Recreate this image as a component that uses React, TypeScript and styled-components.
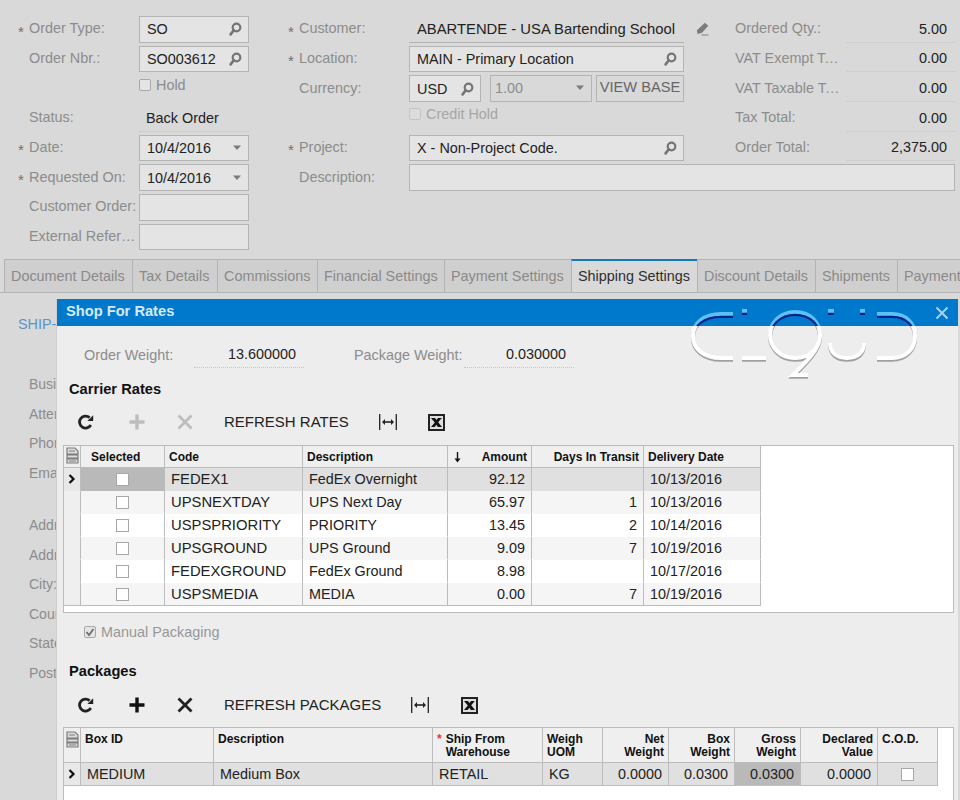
import React from "react";
import styled, { createGlobalStyle } from "styled-components";

const GlobalStyle = createGlobalStyle`
  html, body {
    margin: 0;
    padding: 0;
    background: #d9d9d9;
  }
  body {
    font-family: "Liberation Sans", Arial, sans-serif;
    font-size: 14.4px;
    color: #222;
  }
`;

const Page = styled.div`
  position: relative;
  width: 960px;
  height: 800px;
  overflow: hidden;
  background: #d9d9d9;
`;

/* ---------- order form ---------- */

const Form = styled.div`
  display: flex;
  height: 259px;
  box-sizing: border-box;
  padding: 16px 0 0 21px;
`;

const LeftColumn = styled.div`
  display: flex;
  flex-direction: column;
  gap: 3px;
  width: 228px;
  margin-right: 42px;
`;

const RightBlock = styled.div`
  display: flex;
  flex-direction: column;
  gap: 3px;
  width: 664px;
`;

const RightTop = styled.div`
  display: flex;
  gap: 51px;
`;

const MiddleColumn = styled.div`
  display: flex;
  flex-direction: column;
  gap: 3px;
  width: 393px;
`;

const TotalsColumn = styled.div`
  display: flex;
  flex-direction: column;
  gap: 3px;
  width: 220px;
`;

const Row = styled.div`
  display: flex;
  align-items: center;
  height: 26.67px;
`;

const Star = styled.span`
  flex: 0 0 11px;
  margin-left: -3px;
  font-size: 15px;
  line-height: 15px;
  color: #6f6f6f;
  padding-top: 4px;
`;

const Label = styled.span<{ $width?: number }>`
  flex: 0 0 ${(p) => p.$width ?? 110}px;
  width: ${(p) => p.$width ?? 110}px;
  box-sizing: border-box;
  padding-right: 1px;
  white-space: nowrap;
  overflow: hidden;
  text-overflow: ellipsis;
  color: #8c8c8c;
  margin-top: -2px;
`;

const Field = styled.div<{ $width?: number; $grow?: boolean }>`
  display: flex;
  align-items: center;
  justify-content: space-between;
  box-sizing: border-box;
  height: 100%;
  width: ${(p) => (p.$width ? `${p.$width}px` : "auto")};
  flex: ${(p) => (p.$grow ? 1 : "none")};
  padding: 0 6px 0 7px;
  background: #e4e4e4;
  border: 1px solid #b4b4b4;
  color: #222;
  white-space: nowrap;
`;

const RateField = styled(Field)`
  margin-left: 9px;
  padding-left: 4px;
  padding-bottom: 2px;
  background: #d9d9d9;
  color: #8c8c8c;
`;

const PlainValue = styled.div<{ $width: number; $dotted?: boolean; $right?: boolean; $caps?: boolean }>`
  flex: none;
  box-sizing: border-box;
  width: ${(p) => p.$width}px;
  height: 100%;
  display: flex;
  align-items: center;
  justify-content: ${(p) => (p.$right ? "flex-end" : "flex-start")};
  padding: ${(p) => (p.$right ? "0 8px 0 0" : p.$caps ? "0 0 0 8px" : "0 0 0 7px")};
  border-bottom: 1px ${(p) => (p.$dotted ? "dotted #c6c6c6" : "solid #b4b4b4")};
  font-size: ${(p) => (p.$caps ? "14.8px" : "inherit")};
  white-space: nowrap;
`;

const ViewBase = styled.button`
  flex: none;
  box-sizing: border-box;
  height: 100%;
  width: 88px;
  margin-left: 4px;
  padding: 0 0 3px;
  background: #d9d9d9;
  border: 1px solid #b4b4b4;
  color: #666;
  font: inherit;
  font-size: 14.67px;
  white-space: nowrap;
`;

const CheckRow = styled.label<{ $offset: number; $faint?: boolean }>`
  display: flex;
  align-items: center;
  gap: 5px;
  box-sizing: border-box;
  height: 100%;
  padding-bottom: 8px;
  margin-left: ${(p) => p.$offset}px;
  color: ${(p) => (p.$faint ? "#a6a6a6" : "#8c8c8c")};
`;

const CheckBox = styled.span<{ $white?: boolean; $size?: number; $faint?: boolean }>`
  flex: none;
  display: flex;
  align-items: center;
  justify-content: center;
  box-sizing: border-box;
  width: ${(p) => p.$size ?? 12}px;
  height: ${(p) => p.$size ?? 12}px;
  background: ${(p) => (p.$white ? "#fff" : p.$faint ? "#dcdcdc" : "#e4e4e4")};
  border: 1px solid ${(p) => (p.$faint ? "#c4c4c4" : "#a8a8a8")};
  border-radius: ${(p) => (p.$white ? 0 : 2)}px;
`;

const PencilSlot = styled.span`
  flex: none;
  display: flex;
  margin-left: 11px;
`;

/* ---------- tabs ---------- */

const Tabs = styled.div`
  display: flex;
  height: 34px;
  box-sizing: border-box;
  padding-left: 4px;
  border-bottom: 1px solid #b4b4b4;
  overflow: hidden;
`;

const Tab = styled.div<{ $active?: boolean; $width: number }>`
  flex: none;
  box-sizing: border-box;
  width: ${(p) => p.$width}px;
  height: ${(p) => (p.$active ? 34 : 33)}px;
  padding: ${(p) => (p.$active ? 7 : 8)}px 0 0 6px;
  background: ${(p) => (p.$active ? "#d9d9d9" : "#cfcfcf")};
  color: ${(p) => (p.$active ? "#2e2e2e" : "#8a8a8a")};
  border-top: ${(p) => (p.$active ? "2px solid #1279bf" : "1px solid #b4b4b4")};
  border-left: 1px solid #b4b4b4;
  white-space: nowrap;
`;

/* ---------- what shows beside the dialog ---------- */

const Details = styled.div`
  padding-top: 21px;
`;

const DetailsHeading = styled.div`
  margin-left: 18px;
  height: 20px;
  line-height: 20px;
  color: #5c93c9;
  white-space: nowrap;
`;

const DetailsRow = styled.div<{ $gapTop?: number }>`
  margin: ${(p) => p.$gapTop ?? 0}px 0 0 29px;
  height: 29.5px;
  line-height: 29.5px;
  font-size: 14px;
  color: #8c8c8c;
  white-space: nowrap;
`;

const DetailsList = styled.div`
  margin-top: 36px;
`;

/* ---------- dialog ---------- */

const Modal = styled.div`
  position: absolute;
  top: 299px;
  left: 56px;
  width: 902px;
  bottom: 0;
  box-sizing: border-box;
  background: #ededed;
  border-left: 1px solid #cfcfcf;
  overflow: hidden;
`;

const ModalHeader = styled.div`
  display: flex;
  align-items: center;
  justify-content: space-between;
  box-sizing: border-box;
  height: 27px;
  margin-left: -1px;
  padding: 0 9px 3px 10px;
  background: #0079cd;
  color: #d6e9f7;
  font-size: 14.67px;
  font-weight: bold;
`;

const CloseSlot = styled.span`
  display: flex;
  margin-top: 3px;
`;

const Logo = styled.svg`
  position: absolute;
  top: 8px;
  left: 633px;
`;

const WeightRow = styled.div`
  display: flex;
  align-items: center;
  height: 27px;
  margin: 15px 0 0 27px;
`;

const WeightLabel = styled.span<{ $indent?: number }>`
  flex: none;
  width: 110px;
  margin-left: ${(p) => p.$indent ?? 0}px;
  color: #8c8c8c;
  white-space: nowrap;
`;

const SectionTitle = styled.div<{ $top: number }>`
  margin: ${(p) => p.$top}px 0 0 12px;
  height: 18px;
  line-height: 18px;
  font-size: 14.67px;
  font-weight: bold;
  color: #111;
`;

const Toolbar = styled.div<{ $top: number; $bottom: number }>`
  display: flex;
  align-items: center;
  height: 30px;
  margin: ${(p) => p.$top}px 0 ${(p) => p.$bottom}px 5px;
`;

const ToolSlot = styled.span<{ $width: number }>`
  flex: none;
  display: flex;
  align-items: center;
  justify-content: center;
  width: ${(p) => p.$width}px;
`;

const ToolText = styled.span`
  flex: none;
  padding: 0 15px 1px 18px;
  font-size: 15px;
  color: #222;
  white-space: nowrap;
`;

const GridFrame = styled.div<{ $height: number }>`
  box-sizing: border-box;
  margin-left: 6px;
  width: 891px;
  height: ${(p) => p.$height}px;
  background: #fff;
  border: 1px solid #bcbcbc;
`;

const Table = styled.table`
  border-collapse: separate;
  border-spacing: 0;
  table-layout: fixed;
  tbody tr:last-child td {
    border-bottom-color: #bcbcbc;
  }
`;

const Head = styled.th<{ $align?: string; $top?: boolean }>`
  box-sizing: border-box;
  padding: ${(p) => (p.$top ? "5px 4px 0 4px" : "1px 4px 0 4px")};
  vertical-align: ${(p) => (p.$top ? "top" : "middle")};
  text-align: ${(p) => p.$align ?? "left"};
  background: #efefef;
  border-right: 1px solid #bcbcbc;
  border-bottom: 1px solid #bcbcbc;
  font-size: 12px;
  line-height: 13px;
  font-weight: bold;
  color: #111;
`;

const IconHead = styled(Head)`
  padding: ${(p) => (p.$top ? "3px 0 0" : "0")};
  text-align: center;
`;

const SelectedHead = styled(Head)`
  padding-left: 10px;
`;

const HeadRow = styled.tr<{ $height: number }>`
  height: ${(p) => p.$height}px;
`;

const BodyRow = styled.tr`
  height: 23px;
`;

const Cell = styled.td<{ $align?: string; $bg: string; $caps?: boolean }>`
  box-sizing: border-box;
  padding: 0 6px;
  text-align: ${(p) => p.$align ?? "left"};
  background: ${(p) => p.$bg};
  border-right: 1px solid #bcbcbc;
  border-bottom: 1px solid transparent;
  font-size: ${(p) => (p.$caps ? "14.8px" : "inherit")};
  color: #222;
  white-space: nowrap;
  overflow: hidden;
`;

const IndicatorCell = styled(Cell)`
  padding: 0;
  text-align: center;
`;

const CellCheck = styled.div`
  display: flex;
  justify-content: center;
`;

const SortedHead = styled.div`
  display: flex;
  align-items: center;
  justify-content: space-between;
  padding-left: 1px;
`;

const RequiredHead = styled.div`
  display: flex;
  gap: 4px;
`;

const RedStar = styled.span`
  color: #e23b3b;
`;

const ManualRow = styled.div`
  display: flex;
  align-items: center;
  gap: 5px;
  height: 18px;
  margin: 10px 0 0 27px;
  color: #979797;
`;

/* ---------- icons ---------- */

const SearchIcon = () => (
  <svg width="14" height="14" viewBox="0 0 14 14">
    <circle cx="8.5" cy="5.5" r="3.8" fill="none" stroke="#757575" strokeWidth="2.2" />
    <path d="M5.8 8.2 2.6 12.4" stroke="#757575" strokeWidth="2.6" strokeLinecap="round" />
  </svg>
);

const CaretIcon = () => (
  <svg width="10" height="6" viewBox="0 0 10 6">
    <path d="M1 .5h8L5 5z" fill="#7b7b7b" />
  </svg>
);

const PencilIcon = () => (
  <svg width="14" height="14" viewBox="0 0 14 14">
    <path d="M9.800.8 13.300 3.800 7 10.800 2.500 12 1.800 8.600z" fill="#7b7b7b" />
    <path d="M6.500 13h7" stroke="#9a9a9a" strokeWidth="1.400" />
  </svg>
);

const RefreshIcon = () => (
  <svg width="16" height="16" viewBox="0 0 16 16">
    <path d="M12.800 11A6 6 0 1 1 11.600 3.600" fill="none" stroke="#222" strokeWidth="2.800" />
    <path d="M9.400 7h5.800V1.200z" fill="#222" />
  </svg>
);

const PlusIcon = ({ color }: { color: string }) => (
  <svg width="16" height="16" viewBox="0 0 16 16">
    <path d="M8 .5v15M.5 8h15" stroke={color} strokeWidth="3.400" />
  </svg>
);

const CrossIcon = ({ color }: { color: string }) => (
  <svg width="16" height="16" viewBox="0 0 16 16">
    <path d="M1.500 1.500 14.500 14.500M14.500 1.500 1.500 14.500" stroke={color} strokeWidth="2.800" />
  </svg>
);

const FitIcon = () => (
  <svg width="18" height="16" viewBox="0 0 18 16">
    <path d="M.7 0v16M17.300 0v16" stroke="#222" strokeWidth="1.300" />
    <path d="M4 8h10" stroke="#222" strokeWidth="1.600" />
    <path d="M3 8l3-3v6zM15 8l-3-3v6z" fill="#222" />
  </svg>
);

const ExcelIcon = () => (
  <svg width="17" height="17" viewBox="0 0 17 17">
    <rect x="1" y="1" width="15" height="15" fill="#dedede" stroke="#222" strokeWidth="2" />
    <path d="M3 4h4l1.500 2.100L10 4h3.800L10.200 8.200 14 13h-4.200L8.300 10.800 6.700 13H3l3.800-4.600z" fill="#111" />
  </svg>
);

const ColumnsIcon = () => (
  <svg width="13" height="17" viewBox="0 0 13 17">
    <path d="M1 1h8l3 3v3H1zM1 8h11v3H1zM1 12h11v4H1z" fill="#dcdcdc" stroke="#7c7c7c" strokeWidth="1.200" />
    <path d="M3 4h6M3 14h7" stroke="#7c7c7c" strokeWidth="1.200" />
  </svg>
);

const RowArrow = () => (
  <svg width="8" height="10" viewBox="0 0 8 10">
    <path d="M1.500 1 5.500 5 1.500 9" fill="none" stroke="#111" strokeWidth="2.200" />
  </svg>
);

const SortArrow = () => (
  <svg width="9" height="11" viewBox="0 0 9 11">
    <path d="M4.500 0v8" stroke="#111" strokeWidth="1.400" />
    <path d="M1.500 6.500h6l-3 4z" fill="#111" />
  </svg>
);

const TickIcon = () => (
  <svg width="10" height="10" viewBox="0 0 10 10">
    <path d="M1.500 5 4 8l4.500-6" fill="none" stroke="#6e6e6e" strokeWidth="1.800" />
  </svg>
);

const CloseIcon = () => (
  <svg width="14" height="14" viewBox="0 0 14 14">
    <path d="M1.500 1.500 12.500 12.500M12.500 1.500 1.500 12.500" stroke="#a7d0ee" strokeWidth="2" />
  </svg>
);

const LOGO_STROKES =
  "M733 314H721C704 314 693 323 693 336S704 358 721 358H733" +
  "M742 358H766M742 311H747" +
  "M795 312C810 312 820 322 820 335S810 358 795 358S770 347 770 335S780 312 795 312Z" +
  "M820 336C819 350 806 362 793 375H808" +
  "M828 311H834M860 311H865" +
  "M830 343C830 352 836 358 847 358S864 352 864 343" +
  "M877 314H892C906 314 915 323 915 336S906 358 892 358H877";

const CloudLogo = () => (
  <Logo width="230" height="72" viewBox="690 307 230 72">
    <defs>
      <clipPath id="logo-band">
        <rect x="690" y="307" width="230" height="19" />
      </clipPath>
      <clipPath id="logo-body">
        <rect x="690" y="326" width="230" height="53" />
      </clipPath>
    </defs>
    <g fill="none" clipPath="url(#logo-band)">
      <path d={LOGO_STROKES} stroke="#5cc2f4" strokeWidth="4" />
      <path d={LOGO_STROKES} stroke="#04238f" strokeWidth="2.200" transform="translate(0 2.800)" />
    </g>
    <g fill="none" clipPath="url(#logo-body)">
      <path d={LOGO_STROKES} stroke="#a0a0a0" strokeWidth="4" transform="translate(0 1.800)" />
      <path d={LOGO_STROKES} stroke="#fff" strokeWidth="4" />
    </g>
  </Logo>
);

/* ---------- data ---------- */

const tabs: [string, number][] = [
  ["Document Details", 128],
  ["Tax Details", 85],
  ["Commissions", 100],
  ["Financial Settings", 127],
  ["Payment Settings", 127],
  ["Shipping Settings", 126],
  ["Discount Details", 118],
  ["Shipments", 82],
  ["Payments", 70],
];

const rates = [
  ["FEDEX1", "FedEx Overnight", "92.12", "", "10/13/2016"],
  ["UPSNEXTDAY", "UPS Next Day", "65.97", "1", "10/13/2016"],
  ["USPSPRIORITY", "PRIORITY", "13.45", "2", "10/14/2016"],
  ["UPSGROUND", "UPS Ground", "9.09", "7", "10/19/2016"],
  ["FEDEXGROUND", "FedEx Ground", "8.98", "", "10/17/2016"],
  ["USPSMEDIA", "MEDIA", "0.00", "7", "10/19/2016"],
];

const rateColumns = [17, 84, 138, 145, 84, 112, 117];
const packageColumns = [17, 133, 219, 110, 60, 66, 66, 66, 77, 60];

const totals = [
  ["Ordered Qty.:", "5.00"],
  ["VAT Exempt Total:", "0.00"],
  ["VAT Taxable Total:", "0.00"],
  ["Tax Total:", "0.00"],
  ["Order Total:", "2,375.00"],
];

const rowBackground = (index: number) => {
  if (index === 0) return "#e0e0e0";
  return index % 2 === 1 ? "#f5f5f5" : "#ffffff";
};

const Columns = ({ widths }: { widths: number[] }) => (
  <colgroup>
    {widths.map((w, i) => (
      <col key={i} style={{ width: w }} />
    ))}
  </colgroup>
);

const App = () => {
  return (
    <Page>
      <GlobalStyle />
      <Form>
        <LeftColumn>
          <Row>
            <Star>*</Star>
            <Label>Order Type:</Label>
            <Field $width={110}>SO<SearchIcon /></Field>
          </Row>
          <Row>
            <Star />
            <Label>Order Nbr.:</Label>
            <Field $width={110}>SO003612<SearchIcon /></Field>
          </Row>
          <Row>
            <CheckRow $offset={118}>
              <CheckBox />
              Hold
            </CheckRow>
          </Row>
          <Row>
            <Star />
            <Label>Status:</Label>
            <PlainValue $width={110} $dotted>Back Order</PlainValue>
          </Row>
          <Row>
            <Star>*</Star>
            <Label>Date:</Label>
            <Field $width={110}>10/4/2016<CaretIcon /></Field>
          </Row>
          <Row>
            <Star>*</Star>
            <Label>Requested On:</Label>
            <Field $width={110}>10/4/2016<CaretIcon /></Field>
          </Row>
          <Row>
            <Star />
            <Label>Customer Order:</Label>
            <Field $width={110} />
          </Row>
          <Row>
            <Star />
            <Label>External Reference Nbr.:</Label>
            <Field $width={110} />
          </Row>
        </LeftColumn>

        <RightBlock>
          <RightTop>
            <MiddleColumn>
              <Row>
                <Star>*</Star>
                <Label>Customer:</Label>
                <PlainValue $width={275} $caps>ABARTENDE - USA Bartending School</PlainValue>
                <PencilSlot><PencilIcon /></PencilSlot>
              </Row>
              <Row>
                <Star>*</Star>
                <Label>Location:</Label>
                <Field $width={275}>MAIN - Primary Location<SearchIcon /></Field>
              </Row>
              <Row>
                <Star />
                <Label>Currency:</Label>
                <Field $width={72}>USD<SearchIcon /></Field>
                <RateField $width={102}>1.00<CaretIcon /></RateField>
                <ViewBase>VIEW BASE</ViewBase>
              </Row>
              <Row>
                <CheckRow $offset={118} $faint>
                  <CheckBox $faint />
                  Credit Hold
                </CheckRow>
              </Row>
              <Row>
                <Star>*</Star>
                <Label>Project:</Label>
                <Field $width={275}>X - Non-Project Code.<SearchIcon /></Field>
              </Row>
            </MiddleColumn>
            <TotalsColumn>
              {totals.map(([label, value]) => (
                <Row key={label}>
                  <Label $width={112}>{label}</Label>
                  <PlainValue $width={108} $dotted $right>{value}</PlainValue>
                </Row>
              ))}
            </TotalsColumn>
          </RightTop>
          <Row>
            <Star />
            <Label>Description:</Label>
            <Field $grow />
          </Row>
        </RightBlock>
      </Form>

      <Tabs>
        {tabs.map(([name, width]) => (
          <Tab key={name} $width={width} $active={name === "Shipping Settings"}>{name}</Tab>
        ))}
      </Tabs>

      <Details>
        <DetailsHeading>SHIP-TO CONTACT</DetailsHeading>
        <DetailsList>
          <DetailsRow>Business Name:</DetailsRow>
          <DetailsRow>Attention:</DetailsRow>
          <DetailsRow>Phone 1:</DetailsRow>
          <DetailsRow>Email:</DetailsRow>
          <DetailsRow $gapTop={23}>Address Line 1:</DetailsRow>
          <DetailsRow>Address Line 2:</DetailsRow>
          <DetailsRow>City:</DetailsRow>
          <DetailsRow>Country:</DetailsRow>
          <DetailsRow>State:</DetailsRow>
          <DetailsRow>Postal Code:</DetailsRow>
        </DetailsList>
      </Details>

      <Modal>
        <ModalHeader>
          Shop For Rates
          <CloseSlot><CloseIcon /></CloseSlot>
        </ModalHeader>
        <CloudLogo />

        <WeightRow>
          <WeightLabel>Order Weight:</WeightLabel>
          <PlainValue $width={110} $dotted $right>13.600000</PlainValue>
          <WeightLabel $indent={50}>Package Weight:</WeightLabel>
          <PlainValue $width={110} $dotted $right>0.030000</PlainValue>
        </WeightRow>

        <SectionTitle $top={12}>Carrier Rates</SectionTitle>
        <Toolbar $top={9} $bottom={8}>
          <ToolSlot $width={48}><RefreshIcon /></ToolSlot>
          <ToolSlot $width={54}><PlusIcon color="#bdbdbd" /></ToolSlot>
          <ToolSlot $width={42}><CrossIcon color="#bdbdbd" /></ToolSlot>
          <ToolText>REFRESH RATES</ToolText>
          <ToolSlot $width={48}><FitIcon /></ToolSlot>
          <ToolSlot $width={50}><ExcelIcon /></ToolSlot>
        </Toolbar>

        <GridFrame $height={168}>
          <Table>
            <Columns widths={rateColumns} />
            <thead>
              <HeadRow $height={22}>
                <IconHead><ColumnsIcon /></IconHead>
                <SelectedHead>Selected</SelectedHead>
                <Head>Code</Head>
                <Head>Description</Head>
                <Head>
                  <SortedHead><SortArrow />Amount</SortedHead>
                </Head>
                <Head $align="right">Days In Transit</Head>
                <Head>Delivery Date</Head>
              </HeadRow>
            </thead>
            <tbody>
              {rates.map(([code, description, amount, days, date], i) => (
                <BodyRow key={code}>
                  <IndicatorCell $bg={i === 0 ? "#e8e8e8" : "#efefef"}>{i === 0 && <RowArrow />}</IndicatorCell>
                  <Cell $bg={i === 0 ? "#b9b9b9" : rowBackground(i)}>
                    <CellCheck><CheckBox $white $size={13} /></CellCheck>
                  </Cell>
                  <Cell $bg={rowBackground(i)} $caps>{code}</Cell>
                  <Cell $bg={rowBackground(i)}>{description}</Cell>
                  <Cell $bg={rowBackground(i)} $align="right">{amount}</Cell>
                  <Cell $bg={rowBackground(i)} $align="right">{days}</Cell>
                  <Cell $bg={rowBackground(i)}>{date}</Cell>
                </BodyRow>
              ))}
            </tbody>
          </Table>
        </GridFrame>

        <ManualRow>
          <CheckBox><TickIcon /></CheckBox>
          Manual Packaging
        </ManualRow>

        <SectionTitle $top={21}>Packages</SectionTitle>
        <Toolbar $top={10} $bottom={7}>
          <ToolSlot $width={48}><RefreshIcon /></ToolSlot>
          <ToolSlot $width={54}><PlusIcon color="#111" /></ToolSlot>
          <ToolSlot $width={42}><CrossIcon color="#222" /></ToolSlot>
          <ToolText>REFRESH PACKAGES</ToolText>
          <ToolSlot $width={48}><FitIcon /></ToolSlot>
          <ToolSlot $width={50}><ExcelIcon /></ToolSlot>
        </Toolbar>

        <GridFrame $height={120}>
          <Table>
            <Columns widths={packageColumns} />
            <thead>
              <HeadRow $height={35}>
                <IconHead $top><ColumnsIcon /></IconHead>
                <Head $top>Box ID</Head>
                <Head $top>Description</Head>
                <Head $top>
                  <RequiredHead>
                    <RedStar>*</RedStar>
                    <span>Ship From<br />Warehouse</span>
                  </RequiredHead>
                </Head>
                <Head $top>Weigh<br />UOM</Head>
                <Head $top $align="right">Net<br />Weight</Head>
                <Head $top $align="right">Box<br />Weight</Head>
                <Head $top $align="right">Gross<br />Weight</Head>
                <Head $top $align="right">Declared<br />Value</Head>
                <Head $top>C.O.D.</Head>
              </HeadRow>
            </thead>
            <tbody>
              <BodyRow>
                <IndicatorCell $bg="#e8e8e8"><RowArrow /></IndicatorCell>
                <Cell $bg="#e0e0e0">MEDIUM</Cell>
                <Cell $bg="#e0e0e0">Medium Box</Cell>
                <Cell $bg="#e0e0e0">RETAIL</Cell>
                <Cell $bg="#e0e0e0">KG</Cell>
                <Cell $bg="#e0e0e0" $align="right">0.0000</Cell>
                <Cell $bg="#e0e0e0" $align="right">0.0300</Cell>
                <Cell $bg="#b9b9b9" $align="right">0.0300</Cell>
                <Cell $bg="#e0e0e0" $align="right">0.0000</Cell>
                <Cell $bg="#e0e0e0">
                  <CellCheck><CheckBox $white $size={13} /></CellCheck>
                </Cell>
              </BodyRow>
            </tbody>
          </Table>
        </GridFrame>
      </Modal>
    </Page>
  );
};

export default App;
